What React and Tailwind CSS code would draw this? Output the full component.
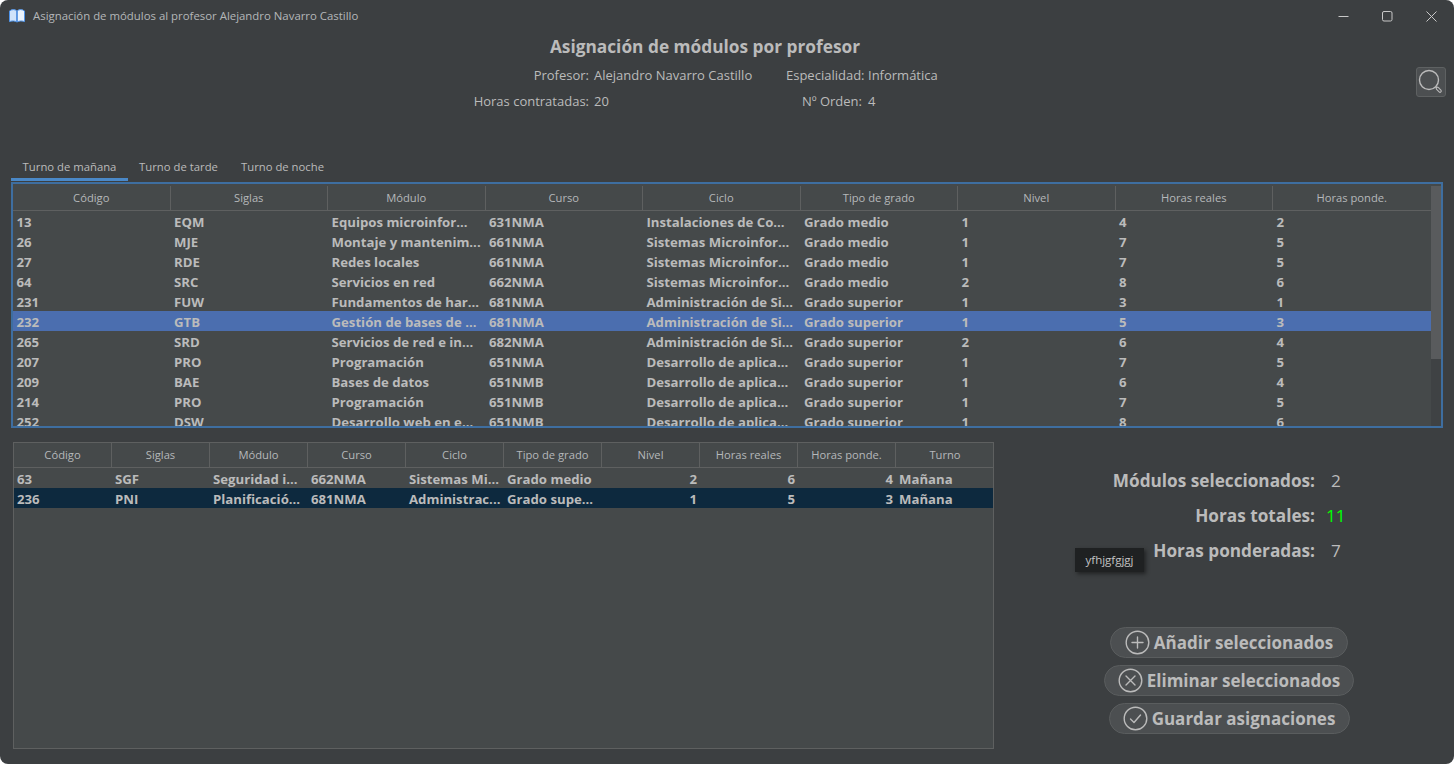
const UI_FONT = "font-['Open_Sans','Noto_Sans',sans-serif]";

const topCols = ["Código", "Siglas", "Módulo", "Curso", "Ciclo", "Tipo de grado", "Nivel", "Horas reales", "Horas ponde."];
const topRows = [
  ["13", "EQM", "Equipos microinfor...", "631NMA", "Instalaciones de Co...", "Grado medio", "1", "4", "2"],
  ["26", "MJE", "Montaje y mantenim...", "661NMA", "Sistemas Microinfor...", "Grado medio", "1", "7", "5"],
  ["27", "RDE", "Redes locales", "661NMA", "Sistemas Microinfor...", "Grado medio", "1", "7", "5"],
  ["64", "SRC", "Servicios en red", "662NMA", "Sistemas Microinfor...", "Grado medio", "2", "8", "6"],
  ["231", "FUW", "Fundamentos de har...", "681NMA", "Administración de Si...", "Grado superior", "1", "3", "1"],
  ["232", "GTB", "Gestión de bases de ...", "681NMA", "Administración de Si...", "Grado superior", "1", "5", "3"],
  ["265", "SRD", "Servicios de red e in...", "682NMA", "Administración de Si...", "Grado superior", "2", "6", "4"],
  ["207", "PRO", "Programación", "651NMA", "Desarrollo de aplica...", "Grado superior", "1", "7", "5"],
  ["209", "BAE", "Bases de datos", "651NMB", "Desarrollo de aplica...", "Grado superior", "1", "6", "4"],
  ["214", "PRO", "Programación", "651NMB", "Desarrollo de aplica...", "Grado superior", "1", "7", "5"],
  ["252", "DSW", "Desarrollo web en e...", "651NMB", "Desarrollo de aplica...", "Grado superior", "1", "8", "6"],
];

const bottomCols = ["Código", "Siglas", "Módulo", "Curso", "Ciclo", "Tipo de grado", "Nivel", "Horas reales", "Horas ponde.", "Turno"];
const bottomRows = [
  ["63", "SGF", "Seguridad i...", "662NMA", "Sistemas Mi...", "Grado medio", "2", "6", "4", "Mañana"],
  ["236", "PNI", "Planificació...", "681NMA", "Administrac...", "Grado supe...", "1", "5", "3", "Mañana"],
];

function HeaderRow({ cols, gridClass }) {
  return (
    <div className={`grid ${gridClass} h-[25px] shrink-0 border-b border-[#5e6060] bg-[#45494a]`}>
      {cols.map((c, i) => (
        <div
          key={c}
          className={`flex items-center justify-center text-[11.2px] text-[#b5b8ba] ${i < cols.length - 1 ? "border-r border-[#5e6060]" : ""}`}
        >
          {c}
        </div>
      ))}
    </div>
  );
}

function Row({ cells, gridClass, rowClass, cellClass, alignRight = [] }) {
  return (
    <div className={`grid ${gridClass} h-[20px] shrink-0 ${rowClass}`}>
      {cells.map((c, i) => (
        <div
          key={i}
          className={`overflow-hidden whitespace-nowrap text-[13.2px] font-bold leading-[22px] text-[#bbbbbb] ${cellClass} ${alignRight.includes(i) ? "text-right" : ""}`}
        >
          {c}
        </div>
      ))}
    </div>
  );
}

function ActionButton({ icon, label, widthClass }) {
  return (
    <button className={`flex h-[31px] items-center justify-center gap-[4px] rounded-full border border-[#5a5d5e] bg-[#4c4f51] ${widthClass}`}>
      <svg width="25" height="25" viewBox="0 0 25 25" fill="none" stroke="#bbbbbb" strokeWidth="1.4" strokeLinecap="round" strokeLinejoin="round">
        <circle cx="12.5" cy="12.5" r="11.3" />
        {icon}
      </svg>
      <span className="text-[17px] font-bold text-[#bbbbbb]">{label}</span>
    </button>
  );
}

export default function App() {
  const topGrid = "grid-cols-[repeat(9,157.5px)]";
  const bottomGrid = "grid-cols-[repeat(10,98px)]";

  return (
    <div className={`${UI_FONT} flex h-[764px] w-[1454px] flex-col overflow-hidden rounded-[8px] bg-[#3c3f41] text-[#bbbbbb]`}>
      {/* Title bar */}
      <div className="flex h-[32px] shrink-0 items-center pl-[9px] pr-[1px]">
        <svg width="16" height="16" viewBox="0 0 16 16">
          <path d="M0.5 3 C3 1 6 1.3 7.7 2.8 V14 C6 12.8 3 12.6 0.5 13.6 Z" fill="#cfe3fa" stroke="#4f93e8" strokeWidth="1" />
          <path d="M15.5 3 C13 1 10 1.3 8.3 2.8 V14 C10 12.8 13 12.6 15.5 13.6 Z" fill="#eaf3fd" stroke="#4f93e8" strokeWidth="1" />
        </svg>
        <span className="ml-[8px] text-[11.4px] text-[#b4b7b9]">Asignación de módulos al profesor Alejandro Navarro Castillo</span>
        <div className="ml-auto flex items-center">
          <div className="flex h-[32px] w-[44px] items-center justify-center">
            <svg width="11" height="11" viewBox="0 0 11 11"><path d="M0.5 5.5H10.5" stroke="#c8c8c8" /></svg>
          </div>
          <div className="flex h-[32px] w-[44px] items-center justify-center">
            <svg width="11" height="11" viewBox="0 0 11 11"><rect x="0.5" y="0.5" width="9.5" height="9.5" rx="1.5" fill="none" stroke="#c8c8c8" /></svg>
          </div>
          <div className="flex h-[32px] w-[44px] items-center justify-center">
            <svg width="11" height="11" viewBox="0 0 11 11"><path d="M0.5 0.5L10.5 10.5M10.5 0.5L0.5 10.5" stroke="#c8c8c8" /></svg>
          </div>
        </div>
      </div>

      {/* Heading */}
      <div className="flex h-[30px] w-[1410px] shrink-0 items-center justify-center text-[17.3px] font-bold text-[#bbbbbb]">
        Asignación de módulos por profesor
      </div>

      {/* Teacher info */}
      <div className="flex h-[64px] shrink-0">
        <div className="grid w-[1416px] grid-cols-[589px_197px_76px_auto] grid-rows-[26px_26px] text-[13px] leading-[26px]">
          <div className="text-right">Profesor:</div>
          <div className="pl-[5px]">Alejandro Navarro Castillo</div>
          <div className="whitespace-nowrap text-right">Especialidad:</div>
          <div className="pl-[6px]">Informática</div>
          <div className="text-right">Horas contratadas:</div>
          <div className="pl-[5px]">20</div>
          <div className="whitespace-nowrap text-right">Nº Orden:</div>
          <div className="pl-[6px]">4</div>
        </div>
        <button className="mt-[5px] flex h-[30px] w-[30px] items-center justify-center rounded-[3px] border border-[#5e6162] bg-[#4c4f51]">
          <svg width="26" height="26" viewBox="0 0 26 26" fill="none" stroke="#bbbbbb">
            <circle cx="11" cy="11" r="9.5" strokeWidth="1.4" />
            <path d="M17.8 17.8L19.5 19.5" strokeWidth="1.4" />
            <path d="M19.5 19.5L22 22" strokeWidth="3.6" strokeLinecap="round" />
            <path d="M19.5 19.5L22 22" strokeWidth="1.4" stroke="#4c4f51" strokeLinecap="round" />
          </svg>
        </button>
      </div>

      {/* Tabs */}
      <div className="ml-[11px] mt-[30px] flex h-[25px] shrink-0 text-[11.3px] text-[#bbbbbb]">
        <div className="flex w-[117px] items-center justify-center border-b-[3px] border-[#4a88c7] pt-[1px]">Turno de mañana</div>
        <div className="flex w-[101px] items-center justify-center pb-[2px]">Turno de tarde</div>
        <div className="flex w-[107px] items-center justify-center pb-[2px]">Turno de noche</div>
      </div>

      {/* Top table */}
      <div className="ml-[11px] mt-[1px] flex h-[246px] w-[1432px] shrink-0 overflow-hidden border-[2px] border-[#3e6ea0] bg-[#45494a] pt-[2px]">
        <div className="flex w-[1417.5px] flex-col overflow-hidden">
          <HeaderRow cols={topCols} gridClass={topGrid} />
          {topRows.map((r, i) => (
            <Row key={r[0]} cells={r} gridClass={topGrid} cellClass="px-[3.5px]" rowClass={i === 5 ? "bg-[#4b6eaf]" : ""} />
          ))}
        </div>
        <div className="flex h-full w-[10px] flex-col bg-[#3f4244]">
          <div className="h-[173px] bg-[#595b5d]" />
        </div>
      </div>

      {/* Bottom area */}
      <div className="ml-[13px] mt-[14px] flex">
        <div className="flex h-[307px] w-[981px] flex-col border border-[#5e6060] bg-[#45494a]">
          <HeaderRow cols={bottomCols} gridClass={bottomGrid} />
          {bottomRows.map((r, i) => (
            <Row key={r[0]} cells={r} gridClass={bottomGrid} cellClass="px-[3px]" rowClass={i === 1 ? "bg-[#0d293e]" : ""} alignRight={[6, 7, 8]} />
          ))}
        </div>

        <div className="relative flex flex-1 flex-col">
          {/* Totals */}
          <div className="mt-[21px] grid grid-cols-[321px_auto] grid-rows-[35px_35px_35px] items-center text-[17.2px] leading-[35px]">
            <div className="text-right font-bold">Módulos seleccionados:</div>
            <div className="pl-[16px] text-[#bbbbbb]">2</div>
            <div className="text-right font-bold">Horas totales:</div>
            <div className="pl-[11px] text-[#00ff00]">11</div>
            <div className="text-right font-bold">Horas ponderadas:</div>
            <div className="pl-[16px] text-[#bbbbbb]">7</div>
          </div>

          {/* Tooltip */}
          <div className="absolute left-[81px] top-[106px] flex h-[24px] w-[69px] items-center justify-center bg-[#1f2122] text-[11.5px] text-[#c4c4c4] shadow-[2px_2px_4px_rgba(0,0,0,0.45)]">
            yfhjgfgjgj
          </div>

          {/* Actions */}
          <div className="mt-[59px] flex w-[470px] flex-col items-center gap-[7px]">
            <ActionButton
              label="Añadir seleccionados"
              widthClass="w-[238px]"
              icon={<path d="M12.5 7V18M7 12.5H18" />}
            />
            <ActionButton
              label="Eliminar seleccionados"
              widthClass="w-[250px]"
              icon={<path d="M8 8L17 17M17 8L8 17" />}
            />
            <ActionButton
              label="Guardar asignaciones"
              widthClass="w-[241px]"
              icon={<path d="M7.5 13L11 16.5L17.5 9" />}
            />
          </div>
        </div>
      </div>
    </div>
  );
}
